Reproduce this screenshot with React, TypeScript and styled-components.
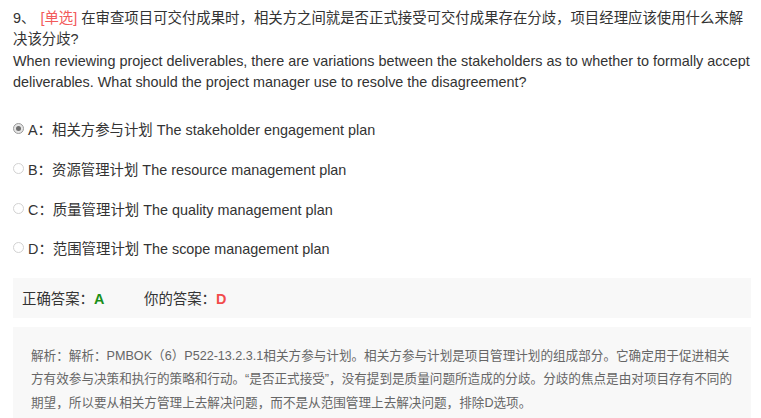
import React from "react";
import styled, { createGlobalStyle } from "styled-components";

const Global = createGlobalStyle`
  html, body { margin: 0; padding: 0; background: #fff; }
  body { font-family: "Liberation Sans", Arial, "Noto Sans CJK SC", sans-serif; color: #333; }
`;

const Page = styled.div`
  padding: 8px 10px 0 13px;
`;

const Question = styled.div`
  font-size: 14.4px;
  line-height: 21.3px;
  color: #333;
`;

const Num = styled.span`
  display: inline-block;
  margin-right: 5px;
`;

const Tag = styled.span`
  display: inline-block;
  color: #f25a5a;
  margin-right: 4px;
`;

const Options = styled.div`
  margin-top: 16px;
  display: flex;
  flex-direction: column;
`;

const Option = styled.label`
  display: flex;
  align-items: center;
  height: 39.6px;
  font-size: 14.4px;
  color: #333;
`;

const Radio = styled.span<{ $checked?: boolean }>`
  width: 11px;
  height: 11px;
  box-sizing: border-box;
  border-radius: 50%;
  border: 1px solid ${(p) => (p.$checked ? "#9a9a9a" : "#d2d2d2")};
  background: ${(p) => (p.$checked ? "#e6e6e6" : "#fff")};
  margin-right: 4px;
  display: flex;
  align-items: center;
  justify-content: center;
  &::after {
    content: "";
    width: 5px;
    height: 5px;
    border-radius: 50%;
    background: ${(p) => (p.$checked ? "#6f6f6f" : "transparent")};
  }
`;

const AnswerBox = styled.div`
  margin-top: 10px;
  width: 738px;
  height: 40px;
  background: #f8f8f8;
  display: flex;
  align-items: center;
  padding-left: 9px;
  box-sizing: border-box;
  font-size: 14.4px;
  color: #333;
`;

const AnswerItem = styled.span`
  width: 122px;
`;

const Letter = styled.b<{ $ok?: boolean }>`
  color: ${(p) => (p.$ok ? "#1a8f1a" : "#f24c4c")};
  font-weight: bold;
`;

const Explain = styled.div`
  margin-top: 9px;
  width: 738px;
  box-sizing: border-box;
  background: #f8f8f8;
  padding: 18px 16px 20px 18px;
  font-size: 12.6px;
  line-height: 23.5px;
  color: #666;
`;

const options = [
  { key: "A", text: "相关方参与计划 The stakeholder engagement plan", checked: true },
  { key: "B", text: "资源管理计划 The resource management plan" },
  { key: "C", text: "质量管理计划 The quality management plan" },
  { key: "D", text: "范围管理计划 The scope management plan" },
];

export default function App() {
  return (
    <Page>
      <Global />
      <Question>
        <Num>9、</Num>
        <Tag>[单选]</Tag>在审查项目可交付成果时，相关方之间就是否正式接受可交付成果存在分歧，项目经理应该使用什么来解决该分歧?
        <br />
        When reviewing project deliverables, there are variations between the stakeholders as to whether to formally accept deliverables. What should the project manager use to resolve the disagreement?
      </Question>
      <Options>
        {options.map((o) => (
          <Option key={o.key}>
            <Radio $checked={o.checked} />
            {o.key}：{o.text}
          </Option>
        ))}
      </Options>
      <AnswerBox>
        <AnswerItem>
          正确答案：<Letter $ok>A</Letter>
        </AnswerItem>
        <AnswerItem>
          你的答案：<Letter>D</Letter>
        </AnswerItem>
      </AnswerBox>
      <Explain>
        解析：解析：PMBOK（6）P522-13.2.3.1相关方参与计划。相关方参与计划是项目管理计划的组成部分。它确定用于促进相关方有效参与决策和执行的策略和行动。“是否正式接受”，没有提到是质量问题所造成的分歧。分歧的焦点是由对项目存有不同的期望，所以要从相关方管理上去解决问题，而不是从范围管理上去解决问题，排除D选项。
      </Explain>
    </Page>
  );
}
